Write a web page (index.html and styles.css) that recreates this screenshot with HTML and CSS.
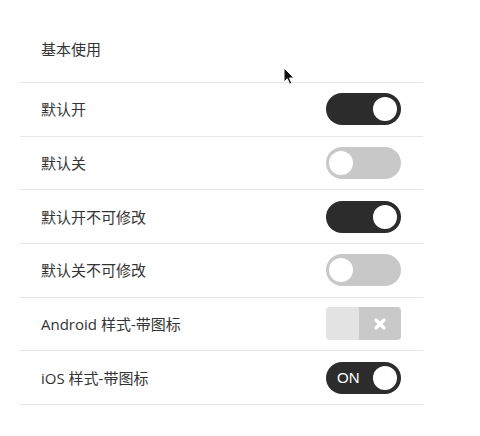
FILE: index.html
```html
<!DOCTYPE html>
<html lang="zh-CN">
<head>
    <meta charset="UTF-8">
    <title>Switch 开关</title>
    <link rel="stylesheet" href="styles.css">
</head>
<body>
<div class="page">
    <div class="list">
        <div class="list-title">基本使用</div>
        <div class="cell">
            <span class="label">默认开</span>
            <span class="switch on"><i class="knob"></i></span>
        </div>
        <div class="cell">
            <span class="label">默认关</span>
            <span class="switch"><i class="knob"></i></span>
        </div>
        <div class="cell">
            <span class="label">默认开不可修改</span>
            <span class="switch on"><i class="knob"></i></span>
        </div>
        <div class="cell">
            <span class="label">默认关不可修改</span>
            <span class="switch"><i class="knob"></i></span>
        </div>
        <div class="cell">
            <span class="label">Android 样式-带图标</span>
            <span class="switch-android">
                <span class="track"></span>
                <span class="thumb">
                    <svg width="12" height="12" viewBox="0 0 12 12"><path d="M2 2 L10 10 M10 2 L2 10" stroke="#fff" stroke-width="3.2" stroke-linecap="round"/></svg>
                </span>
            </span>
        </div>
        <div class="cell">
            <span class="label">iOS 样式-带图标</span>
            <span class="switch on with-text"><em class="text">ON</em><i class="knob"></i></span>
        </div>
    </div>
    <svg class="cursor" width="12" height="19" viewBox="0 0 12 19">
        <path d="M1 1 L1 15 L4.3 11.8 L6.6 17.2 L8.8 16.2 L6.5 11 L11 11 Z" fill="#111" stroke="#fff" stroke-width="1"/>
    </svg>
</div>
</body>
</html>
```
FILE: styles.css
```css
*{
    margin:0;
    padding:0;
    box-sizing: border-box;
}
body{
    background: #fff;
    font-family: "Open Sans", "Noto Sans CJK SC", sans-serif;
    color: #333;
    font-size: 15px;
}
.page{
    position: relative;
    width: 480px;
    height: 436px;
}
.list{
    margin-left: 20px;
    width: 403px;
}
.list-title{
    height: 83px;
    padding: 39px 21px 0;
    line-height: 20px;
    border-bottom: 1px solid #e6e6e6;
}
.cell{
    height: 53.67px;
    padding: 0 22px 0 21px;
    display: flex;
    align-items: center;
    justify-content: space-between;
    border-bottom: 1px solid #e6e6e6;
}
.label{
    line-height: 20px;
}
.switch{
    position: relative;
    width: 75px;
    height: 32px;
    border-radius: 16px;
    background: #c8c8c8;
    display: flex;
    align-items: center;
}
.switch .knob{
    position: absolute;
    top: 4px;
    left: 3px;
    width: 24px;
    height: 24px;
    border-radius: 50%;
    background: #fff;
}
.switch.on{
    background: #2c2c2c;
}
.switch.on .knob{
    left: auto;
    right: 4px;
}
.switch .text{
    font-family: "Liberation Sans", sans-serif;
    font-style: normal;
    color: #fff;
    font-size: 15px;
    margin-left: 11px;
    line-height: 20px;
}
.switch-android{
    width: 75px;
    height: 33px;
    border-radius: 4px;
    overflow: hidden;
    display: flex;
}
.switch-android .track{
    width: 33px;
    background: #e3e3e3;
}
.switch-android .thumb{
    flex: 1;
    background: #c9c9c9;
    display: flex;
    align-items: center;
    justify-content: center;
}
.switch-android svg{
    display: block;
}
.cursor{
    position: absolute;
    left: 283px;
    top: 67px;
}
```
